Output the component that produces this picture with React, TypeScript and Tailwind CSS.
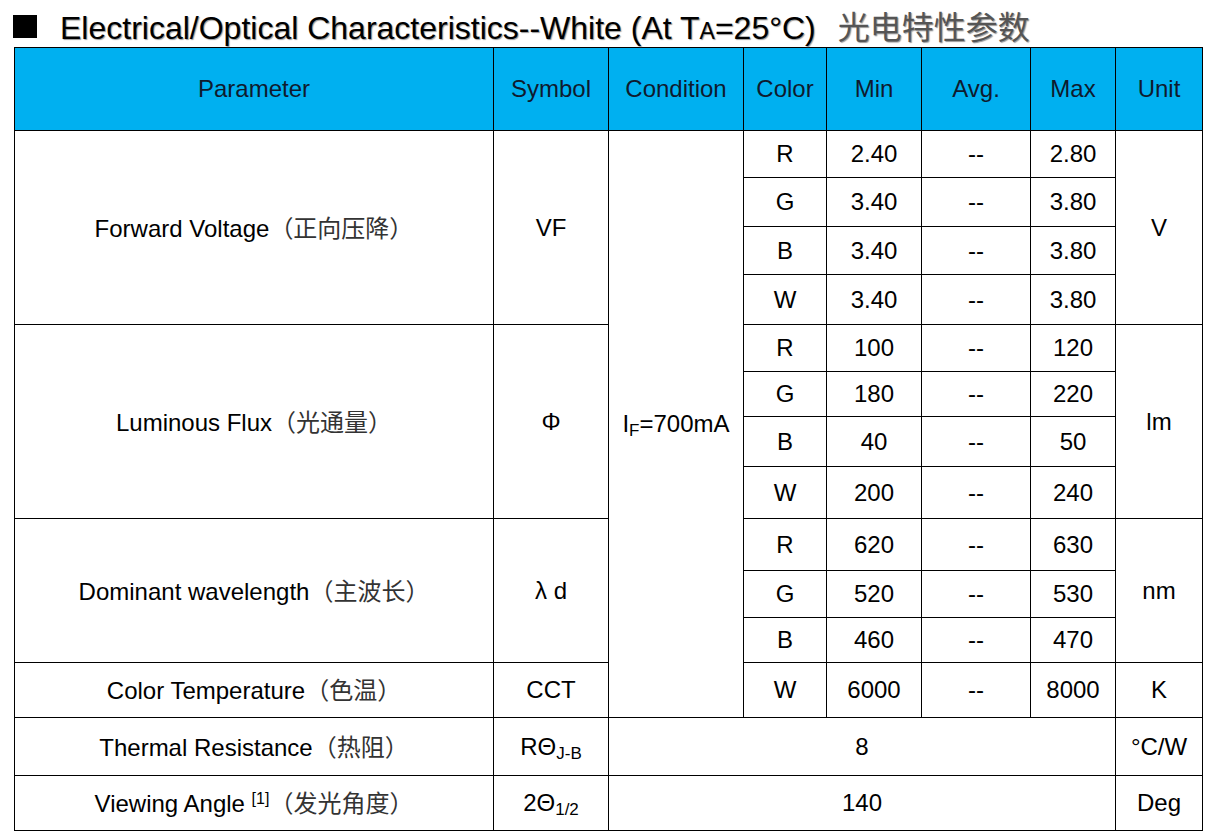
const font = { fontFamily: '"Liberation Sans", Arial, "Noto Sans CJK SC", sans-serif' }

type Sub = { r: string; min: string; max: string; h: number }

const cell = "border border-black text-center align-middle p-0"

function Cn({ children }: { children: string }) {
    return <span className="font-[Noto_Sans_CJK_SC] text-[#333] text-[24px]">{children}</span>
}

export default function App() {
    const vf: Sub[] = [
        { r: "R", min: "2.40", max: "2.80", h: 47 },
        { r: "G", min: "3.40", max: "3.80", h: 49 },
        { r: "B", min: "3.40", max: "3.80", h: 48 },
        { r: "W", min: "3.40", max: "3.80", h: 50 },
    ]
    const flux: Sub[] = [
        { r: "R", min: "100", max: "120", h: 47 },
        { r: "G", min: "180", max: "220", h: 45 },
        { r: "B", min: "40", max: "50", h: 50 },
        { r: "W", min: "200", max: "240", h: 52 },
    ]
    const wl: Sub[] = [
        { r: "R", min: "620", max: "630", h: 52 },
        { r: "G", min: "520", max: "530", h: 47 },
        { r: "B", min: "460", max: "470", h: 45 },
    ]

    const subRow = (s: Sub) => (
        <>
            <td className={cell}>{s.r}</td>
            <td className={cell}>{s.min}</td>
            <td className={cell}>--</td>
            <td className={cell}>{s.max}</td>
        </>
    )

    return (
        <div className="w-[1215px] h-[840px] bg-white text-black overflow-hidden" style={font}>
            <div className="flex items-center h-[47px] pl-[13px] pt-[6px]">
                <div className="w-[24px] h-[23px] bg-black mr-[23px]" />
                <div className="text-[32px] leading-none whitespace-nowrap [text-shadow:1px_1px_1px_#999]">
                    Electrical/Optical Characteristics--White (At T<span className="text-[23px]">A</span>=25°C)
                    <span className="ml-[22px] text-[32px] text-[#555] font-[Noto_Sans_CJK_SC]">光电特性参数</span>
                </div>
            </div>
            <table className="ml-[14px] border-collapse text-[24px] leading-none table-fixed w-[1188px]">
                <colgroup>
                    <col className="w-[479px]" />
                    <col className="w-[115px]" />
                    <col className="w-[135px]" />
                    <col className="w-[83px]" />
                    <col className="w-[95px]" />
                    <col className="w-[109px]" />
                    <col className="w-[85px]" />
                    <col className="w-[87px]" />
                </colgroup>
                <thead>
                    <tr className="h-[83px] bg-[#00b0f0] text-[#0f1a2e]">
                        {["Parameter", "Symbol", "Condition", "Color", "Min", "Avg.", "Max", "Unit"].map(h => (
                            <th key={h} className={`${cell} font-normal`}>{h}</th>
                        ))}
                    </tr>
                </thead>
                <tbody>
                    {vf.map((s, i) => (
                        <tr key={"vf" + i} style={{ height: s.h }}>
                            {i === 0 && <>
                                <td rowSpan={4} className={cell}>Forward Voltage<Cn>（正向压降）</Cn></td>
                                <td rowSpan={4} className={cell}>VF</td>
                                <td rowSpan={12} className={cell}>I<sub className="text-[17px] align-baseline relative top-[4px]">F</sub>=700mA</td>
                            </>}
                            {subRow(s)}
                            {i === 0 && <td rowSpan={4} className={cell}>V</td>}
                        </tr>
                    ))}
                    {flux.map((s, i) => (
                        <tr key={"fl" + i} style={{ height: s.h }}>
                            {i === 0 && <>
                                <td rowSpan={4} className={cell}>Luminous Flux<Cn>（光通量）</Cn></td>
                                <td rowSpan={4} className={cell}>Φ</td>
                            </>}
                            {subRow(s)}
                            {i === 0 && <td rowSpan={4} className={cell}>lm</td>}
                        </tr>
                    ))}
                    {wl.map((s, i) => (
                        <tr key={"wl" + i} style={{ height: s.h }}>
                            {i === 0 && <>
                                <td rowSpan={3} className={cell}>Dominant wavelength<Cn>（主波长）</Cn></td>
                                <td rowSpan={3} className={cell}>λ d</td>
                            </>}
                            {subRow(s)}
                            {i === 0 && <td rowSpan={3} className={cell}>nm</td>}
                        </tr>
                    ))}
                    <tr className="h-[55px]">
                        <td className={cell}>Color Temperature<Cn>（色温）</Cn></td>
                        <td className={cell}>CCT</td>
                        <td className={cell}>W</td>
                        <td className={cell}>6000</td>
                        <td className={cell}>--</td>
                        <td className={cell}>8000</td>
                        <td className={cell}>K</td>
                    </tr>
                    <tr className="h-[58px]">
                        <td className={cell}>Thermal Resistance<Cn>（热阻）</Cn></td>
                        <td className={cell}>RΘ<sub className="text-[17px] align-baseline relative top-[4px]">J-B</sub></td>
                        <td colSpan={5} className={cell}>8</td>
                        <td className={cell}>°C/W</td>
                    </tr>
                    <tr className="h-[55px]">
                        <td className={cell}>Viewing Angle <sup className="text-[16px] align-baseline relative -top-[8px]">[1]</sup><Cn>（发光角度）</Cn></td>
                        <td className={cell}>2Θ<sub className="text-[17px] align-baseline relative top-[4px]">1/2</sub></td>
                        <td colSpan={5} className={cell}>140</td>
                        <td className={cell}>Deg</td>
                    </tr>
                </tbody>
            </table>
        </div>
    )
}
